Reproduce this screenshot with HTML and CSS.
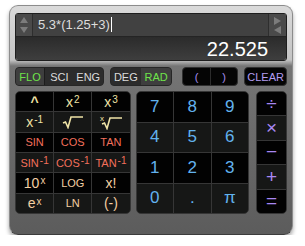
FILE: index.html
```html
<!DOCTYPE html>
<html lang="en">
<head>
    <meta charset="UTF-8">
    <title>Calculator</title>
    <link rel="stylesheet" href="styles.css">
</head>
<body>

<div class="calc">
    <div class="display">
        <div class="entry">
            <div class="spin">
                <svg width="16" height="22" viewBox="0 0 16 22">
                    <path d="M8 3 L12 9 L4 9 Z" fill="#7c7c7c"/>
                    <path d="M8 19 L12 13 L4 13 Z" fill="#7c7c7c"/>
                </svg>
            </div>
            <div class="expr">5.3*(1.25+3)<span class="caret"></span></div>
            <div class="nav">
                <svg width="17" height="22" viewBox="0 0 17 22">
                    <path d="M5 3 L12 7 L5 11 Z" fill="#7c7c7c"/>
                    <path d="M12 12 L5 16 L12 20 Z" fill="#7c7c7c"/>
                </svg>
            </div>
        </div>
        <div class="result">22.525</div>
    </div>

    <div class="modes">
        <div class="seg fmt">
            <span class="on first">FLO</span><span>SCI</span><span>ENG</span>
        </div>
        <div class="seg ang">
            <span>DEG</span><span class="on">RAD</span>
        </div>
        <div class="seg dark parens">
            <span>(</span><span>)</span>
        </div>
        <div class="seg dark clear">
            <span>CLEAR</span>
        </div>
    </div>

    <div class="keys">
        <div class="pad fn">
            <div class="k yel caret-key">^</div>
            <div class="k yel m">x<sup>2</sup></div>
            <div class="k yel m">x<sup>3</sup></div>
            <div class="k yel m">x<sup>-1</sup></div>
            <div class="k yel">
                <svg width="22" height="14" viewBox="0 0 22 14">
                    <path d="M1 8 L3.5 7 L6 12.5 L9 2 L21 2" fill="none" stroke="#efe3a6" stroke-width="1.6"/>
                </svg>
            </div>
            <div class="k yel">
                <svg width="24" height="16" viewBox="0 0 24 16">
                    <text x="1" y="7" font-size="8" font-family="Liberation Sans, sans-serif" fill="#efe3a6">x</text>
                    <path d="M3 10 L5.5 9 L8 14.5 L11 4 L23 4" fill="none" stroke="#efe3a6" stroke-width="1.6"/>
                </svg>
            </div>
            <div class="k red">SIN</div>
            <div class="k red">COS</div>
            <div class="k red">TAN</div>
            <div class="k red">SIN<sup>-1</sup></div>
            <div class="k red">COS<sup>-1</sup></div>
            <div class="k red">TAN<sup>-1</sup></div>
            <div class="k tan m">10<sup>x</sup></div>
            <div class="k tan">LOG</div>
            <div class="k tan m">x!</div>
            <div class="k tan m">e<sup>x</sup></div>
            <div class="k tan">LN</div>
            <div class="k tan m">(-)</div>
        </div>

        <div class="pad num">
            <div class="k">7</div>
            <div class="k">8</div>
            <div class="k">9</div>
            <div class="k">4</div>
            <div class="k">5</div>
            <div class="k">6</div>
            <div class="k">1</div>
            <div class="k">2</div>
            <div class="k">3</div>
            <div class="k">0</div>
            <div class="k">.</div>
            <div class="k">&pi;</div>
        </div>

        <div class="pad ops">
            <div class="k">&divide;</div>
            <div class="k">&times;</div>
            <div class="k">&minus;</div>
            <div class="k">+</div>
            <div class="k">=</div>
        </div>
    </div>
</div>

</body>
</html>
```

FILE: styles.css
```css
body {
    margin: 0;
    padding: 5px 0 0 9px;
    background-color: #ffffff;
    font-family: "Liberation Sans", "DejaVu Sans", sans-serif;
}

.calc {
    box-sizing: border-box;
    width: 284px;
    height: 230px;
    padding: 7px 5px 0 5px;
    border: 1px solid #8c8c8c;
    border-bottom-color: #3c3c3c;
    border-radius: 9px;
    background: linear-gradient(#dadada, #c4c4c4 54px, #757575 60px, #5c5c5c 100%);
    box-shadow: 0 3px 4px rgba(0, 0, 0, 0.35);
}

/* display */

.display {
    border: 1px solid #1e1e1e;
    border-radius: 3px;
    overflow: hidden;
    height: 48px;
    box-sizing: border-box;
}

.entry {
    display: flex;
    height: 23px;
    background: #414141;
    border-bottom: 1px solid #242424;
    box-sizing: border-box;
}

.spin {
    width: 16px;
    background: #4a4a4a;
    border-right: 1px solid #2e2e2e;
}

.expr {
    flex: 1;
    padding-left: 5px;
    color: #dddddd;
    font-size: 13px;
    line-height: 22px;
}

.caret {
    display: inline-block;
    width: 1px;
    height: 15px;
    margin-left: 1px;
    vertical-align: -3px;
    background: #ffffff;
}

.nav {
    width: 17px;
    background: #4a4a4a;
    border-left: 1px solid #2e2e2e;
}

.result {
    height: 23px;
    padding-right: 18px;
    text-align: right;
    color: #ffffff;
    font-size: 20px;
    line-height: 25px;
    background: linear-gradient(#2b2b2b, #3e3e3e);
}

/* mode buttons */

.modes {
    display: flex;
    height: 19px;
    margin-top: 6px;
}

.seg {
    display: flex;
    box-sizing: border-box;
    border: 1px solid #262626;
    border-radius: 4px;
    overflow: hidden;
    background: #2c2c2c;
    color: #dcdcdc;
    font-size: 11px;
}

.seg span {
    flex: 1;
    display: flex;
    align-items: center;
    justify-content: center;
}

.seg .on {
    color: #6ee34a;
    background: #3e3e3e;
}

.seg .first {
    flex: 0 0 28px;
    border-right: 1px solid #1c1c1c;
}

.fmt {
    width: 89px;
}

.ang {
    width: 63px;
    margin-left: 6px;
}

.dark {
    background: #050505;
    border-color: #303030;
    color: #a58ff0;
}

.parens {
    width: 56px;
    margin-left: 10px;
}

.parens span + span {
    border-left: 1px solid #2c2c2c;
}

.clear {
    width: 43px;
    margin-left: 6px;
    color: #b39cf2;
}

/* keypad */

.keys {
    display: flex;
    height: 123px;
    margin-top: 5px;
}

.pad {
    display: grid;
    gap: 1px;
    box-sizing: border-box;
    border: 1px solid #363636;
    border-radius: 5px;
    overflow: hidden;
    background: #363636;
}

.k {
    display: flex;
    align-items: center;
    justify-content: center;
    background: #020202;
}

.fn {
    width: 116px;
    grid-template-columns: repeat(3, 1fr);
    grid-template-rows: repeat(6, 1fr);
    font-size: 11px;
}

.fn .k:nth-child(6n+4),
.fn .k:nth-child(6n+5),
.fn .k:nth-child(6n+6),
.num .k:nth-child(6n+4),
.num .k:nth-child(6n+5),
.num .k:nth-child(6n+6),
.ops .k:nth-child(even) {
    background: #161716;
}

.fn .m {
    font-size: 14px;
}

.fn .caret-key {
    font-size: 14px;
    font-weight: bold;
}

.fn sup {
    font-size: 10px;
    position: relative;
    top: -2px;
    margin-left: 1px;
}

.yel {
    color: #efe3a6;
}

.red {
    color: #f2705c;
}

.tan {
    color: #f4cfa2;
}

.num {
    width: 114px;
    margin-left: 5px;
    grid-template-columns: repeat(3, 1fr);
    grid-template-rows: repeat(4, 1fr);
    color: #62b2ee;
    font-size: 17px;
}

.ops {
    width: 31px;
    margin-left: 7px;
    grid-template-rows: repeat(5, 1fr);
    color: #a887f2;
    font-size: 19px;
}
```
